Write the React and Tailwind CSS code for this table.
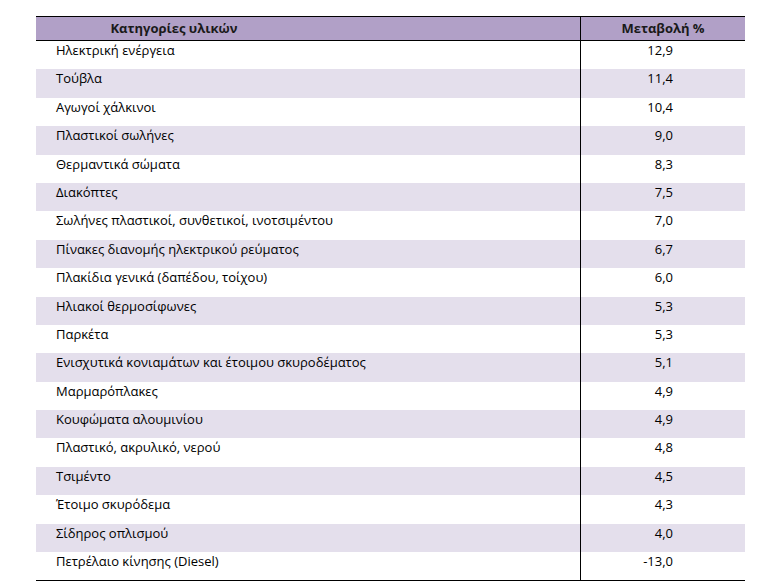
const rows = [
  ["Ηλεκτρική ενέργεια", "12,9"],
  ["Τούβλα", "11,4"],
  ["Αγωγοί χάλκινοι", "10,4"],
  ["Πλαστικοί σωλήνες", "9,0"],
  ["Θερμαντικά σώματα", "8,3"],
  ["Διακόπτες", "7,5"],
  ["Σωλήνες πλαστικοί, συνθετικοί, ινοτσιμέντου", "7,0"],
  ["Πίνακες διανομής ηλεκτρικού ρεύματος", "6,7"],
  ["Πλακίδια γενικά (δαπέδου, τοίχου)", "6,0"],
  ["Ηλιακοί θερμοσίφωνες", "5,3"],
  ["Παρκέτα", "5,3"],
  ["Ενισχυτικά κονιαμάτων και έτοιμου σκυροδέματος", "5,1"],
  ["Μαρμαρόπλακες", "4,9"],
  ["Κουφώματα αλουμινίου", "4,9"],
  ["Πλαστικό, ακρυλικό, νερού", "4,8"],
  ["Τσιμέντο", "4,5"],
  ["Έτοιμο σκυρόδεμα", "4,3"],
  ["Σίδηρος οπλισμού", "4,0"],
  ["Πετρέλαιο κίνησης (Diesel)", "-13,0"],
];

export default function App() {
  return (
    <div className="min-h-[586px] bg-white pt-[16px] pl-[36px] font-['Open_Sans',sans-serif] text-[13px] text-black">
      <div className="w-[709px] border-b border-black">
        <div className="flex h-[25px] border-y border-black bg-[#B1A0C7] font-bold text-[#1a1a1a]">
          <div className="w-[544px] shrink-0 flex items-center">
            <div className="w-[276px] text-center">Κατηγορίες υλικών</div>
          </div>
          <div className="flex-1 border-l border-black flex items-center justify-center">Μεταβολή %</div>
        </div>
        {rows.map(([name, val], i) => (
          <div
            key={name}
            className={`flex h-[28.4px] ${i % 2 === 1 ? "bg-[#E4DFEC]" : "bg-white"}`}
          >
            <div className="w-[544px] shrink-0 pl-[20px] leading-[18px]">{name}</div>
            <div className="flex-1 border-l border-black pr-[72px] leading-[18px] text-right">{val}</div>
          </div>
        ))}
      </div>
    </div>
  );
}
